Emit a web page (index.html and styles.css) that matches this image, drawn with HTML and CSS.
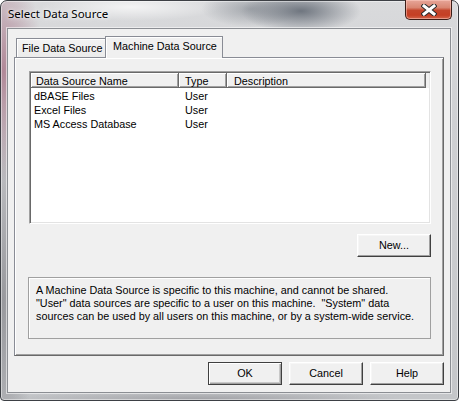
FILE: index.html
```html
<!DOCTYPE html>
<html>
<head>
<meta charset="utf-8">
<link rel="stylesheet" href="styles.css">
</head>
<body>
<div class="window">
  <div class="titlebar">
    <span class="title">Select Data Source</span>
    <div class="close">
      <svg width="16" height="12" viewBox="0 0 16 12">
        <path d="M3 2 L13 10 M13 2 L3 10" stroke="#2a2a2a" stroke-width="5" stroke-linecap="square" fill="none"/>
        <path d="M3 2 L13 10 M13 2 L3 10" stroke="#ffffff" stroke-width="3" stroke-linecap="square" fill="none"/>
      </svg>
    </div>
  </div>
  <div class="client">
    <div class="tabs">
      <div class="tab">File Data Source</div>
      <div class="tab active">Machine Data Source</div>
    </div>
    <div class="panel">
      <div class="list">
        <div class="header">
          <div class="hcol c1">Data Source Name</div>
          <div class="hcol c2">Type</div>
          <div class="hcol c3">Description</div>
        </div>
        <div class="row"><span class="r1">dBASE Files</span><span class="r2">User</span></div>
        <div class="row"><span class="r1">Excel Files</span><span class="r2">User</span></div>
        <div class="row"><span class="r1">MS Access Database</span><span class="r2">User</span></div>
      </div>
      <div class="new-row"><div class="btn">New...</div></div>
      <div class="note">A Machine Data Source is specific to this machine, and cannot be shared.<br>"User" data sources are specific to a user on this machine.&nbsp; "System" data<br>sources can be used by all users on this machine, or by a system-wide service.</div>
    </div>
    <div class="buttons">
      <div class="btn default">OK</div>
      <div class="btn">Cancel</div>
      <div class="btn">Help</div>
    </div>
  </div>
</div>
</body>
</html>
```
FILE: styles.css
```css
html, body {
  margin: 0;
  padding: 0;
  background: #ffffff;
}
body {
  width: 459px;
  height: 401px;
  overflow: hidden;
  font-family: "Liberation Sans", Arial, sans-serif;
  font-size: 10.8px;
  color: #000;
}
.window {
  box-sizing: border-box;
  width: 459px;
  height: 401px;
  border: 1px solid #3d4045;
  border-radius: 7px 7px 4px 4px;
  padding: 0 7px 7px 6px;
  display: flex;
  flex-direction: column;
  background:
    radial-gradient(ellipse 40px 110px at 2px 70px, rgba(165, 110, 130, 0.75), rgba(165, 110, 130, 0)),
    radial-gradient(ellipse 60px 22px at 300px 10px, rgba(105, 112, 122, 0.95), rgba(105, 112, 122, 0)),
    radial-gradient(ellipse 50px 18px at 250px 8px, rgba(140, 145, 152, 0.7), rgba(140, 145, 152, 0)),
    radial-gradient(ellipse 90px 14px at 130px 6px, rgba(255, 255, 255, 0.7), rgba(255, 255, 255, 0)),
    radial-gradient(ellipse 30px 200px at 2px 300px, rgba(120, 120, 125, 0.6), rgba(120, 120, 125, 0)),
    radial-gradient(ellipse 200px 8px at 200px 398px, rgba(140, 140, 145, 0.6), rgba(140, 140, 145, 0)),
    linear-gradient(to bottom, #d9dadc 0%, #cfd0d3 30%, #c4c6c9 100%);
  box-shadow: inset 0 0 0 1px rgba(255, 255, 255, 0.45);
}
.titlebar {
  height: 27px;
  display: flex;
  justify-content: space-between;
  align-items: flex-start;
}
.title {
  font-family: "Noto Sans", "Open Sans", sans-serif;
  font-size: 11.5px;
  line-height: 14px;
  margin-top: 6px;
  margin-left: 1px;
  color: #000;
  text-shadow: 0 0 6px rgba(255, 255, 255, 0.9), 0 0 3px rgba(255, 255, 255, 0.9);
}
.close {
  box-sizing: border-box;
  width: 47px;
  height: 20px;
  margin-top: -1px;
  margin-right: -1px;
  border: 1px solid #3b1d17;
  border-top: none;
  border-radius: 0 0 5px 5px;
  background: linear-gradient(to bottom, #e7a699 0%, #d98672 40%, #c4452b 55%, #c53f24 80%, #d2654b 100%);
  box-shadow: inset 0 0 0 1px rgba(255, 210, 200, 0.5);
  display: flex;
  align-items: center;
  justify-content: center;
}
.client {
  flex: 1;
  box-sizing: border-box;
  background: #f0f0f0;
  border: 1px solid #8b8e93;
  box-shadow: 0 0 0 1px rgba(255, 255, 255, 0.55);
  padding: 7px 6px 0 6px;
  display: flex;
  flex-direction: column;
}
.tabs {
  height: 21px;
  display: flex;
  align-items: flex-end;
  position: relative;
  z-index: 2;
}
.tab {
  box-sizing: border-box;
  height: 19px;
  line-height: 18px;
  padding-left: 5px;
  width: 90px;
  margin-left: 2px;
  border: 1px solid #898c95;
  border-bottom: none;
  background: linear-gradient(to bottom, #f3f3f3, #ebebeb);
  box-shadow: inset 1px 1px 0 #ffffff;
  white-space: nowrap;
}
.tab.active {
  width: 118px;
  height: 22px;
  line-height: 19px;
  margin-left: -1px;
  margin-bottom: -1px;
  padding-left: 7px;
  background: #f0f0f0;
  border-color: #898c95;
  box-shadow: inset 1px 1px 0 #ffffff;
}
.panel {
  box-sizing: border-box;
  height: 299px;
  border: 1px solid #898c95;
  border-right-color: #696969;
  border-bottom-color: #696969;
  box-shadow: inset 1px 1px 0 #ffffff, inset -1px -1px 0 #a0a0a0;
  padding: 13px 12px 0 14px;
  display: flex;
  flex-direction: column;
}
.list {
  box-sizing: border-box;
  height: 153px;
  background: #ffffff;
  border: 1px solid;
  border-color: #a0a0a0 #ffffff #ffffff #a0a0a0;
  box-shadow: inset 1px 1px 0 #696969, inset -1px -1px 0 #e3e3e3;
  padding: 1px;
}
.header {
  display: flex;
  height: 15px;
  background: #f0f0f0;
}
.hcol {
  box-sizing: border-box;
  height: 15px;
  line-height: 16px;
  border-right: 1px solid #696969;
  border-bottom: 1px solid #696969;
  box-shadow: inset 1px 1px 0 #ffffff, inset -1px -1px 0 #a0a0a0;
  white-space: nowrap;
}
.c1 { width: 148px; padding-left: 5px; }
.c2 { width: 48px; padding-left: 6px; }
.c3 { width: 199px; padding-left: 7px; }
.row {
  display: flex;
  height: 14px;
  line-height: 16px;
}
.r1 { width: 148px; padding-left: 3px; box-sizing: border-box; }
.r2 { padding-left: 6px; }
.new-row {
  display: flex;
  justify-content: flex-end;
  margin-top: 10px;
}
.btn {
  box-sizing: border-box;
  width: 74px;
  height: 23px;
  line-height: 21px;
  text-align: center;
  background: #f0f0f0;
  border: 1px solid;
  border-color: #ffffff #404040 #404040 #ffffff;
  box-shadow: inset -1px -1px 0 #a0a0a0, inset 1px 1px 0 #f6f6f6;
}
.btn.default {
  border: 1px solid #404040;
  box-shadow: inset 1px 1px 0 #ffffff, inset -1px -1px 0 #a0a0a0, inset -2px -2px 0 #c8c8c8;
}
.note {
  box-sizing: border-box;
  height: 62px;
  margin-top: 20px;
  margin-left: -1px;
  border: 1px solid #a0a0a0;
  box-shadow: 1px 1px 0 #ffffff inset;
  padding: 6px 0 0 7px;
  line-height: 13px;
  white-space: nowrap;
}
.buttons {
  display: flex;
  justify-content: flex-end;
  gap: 7px;
  margin-top: 6px;
}
```
